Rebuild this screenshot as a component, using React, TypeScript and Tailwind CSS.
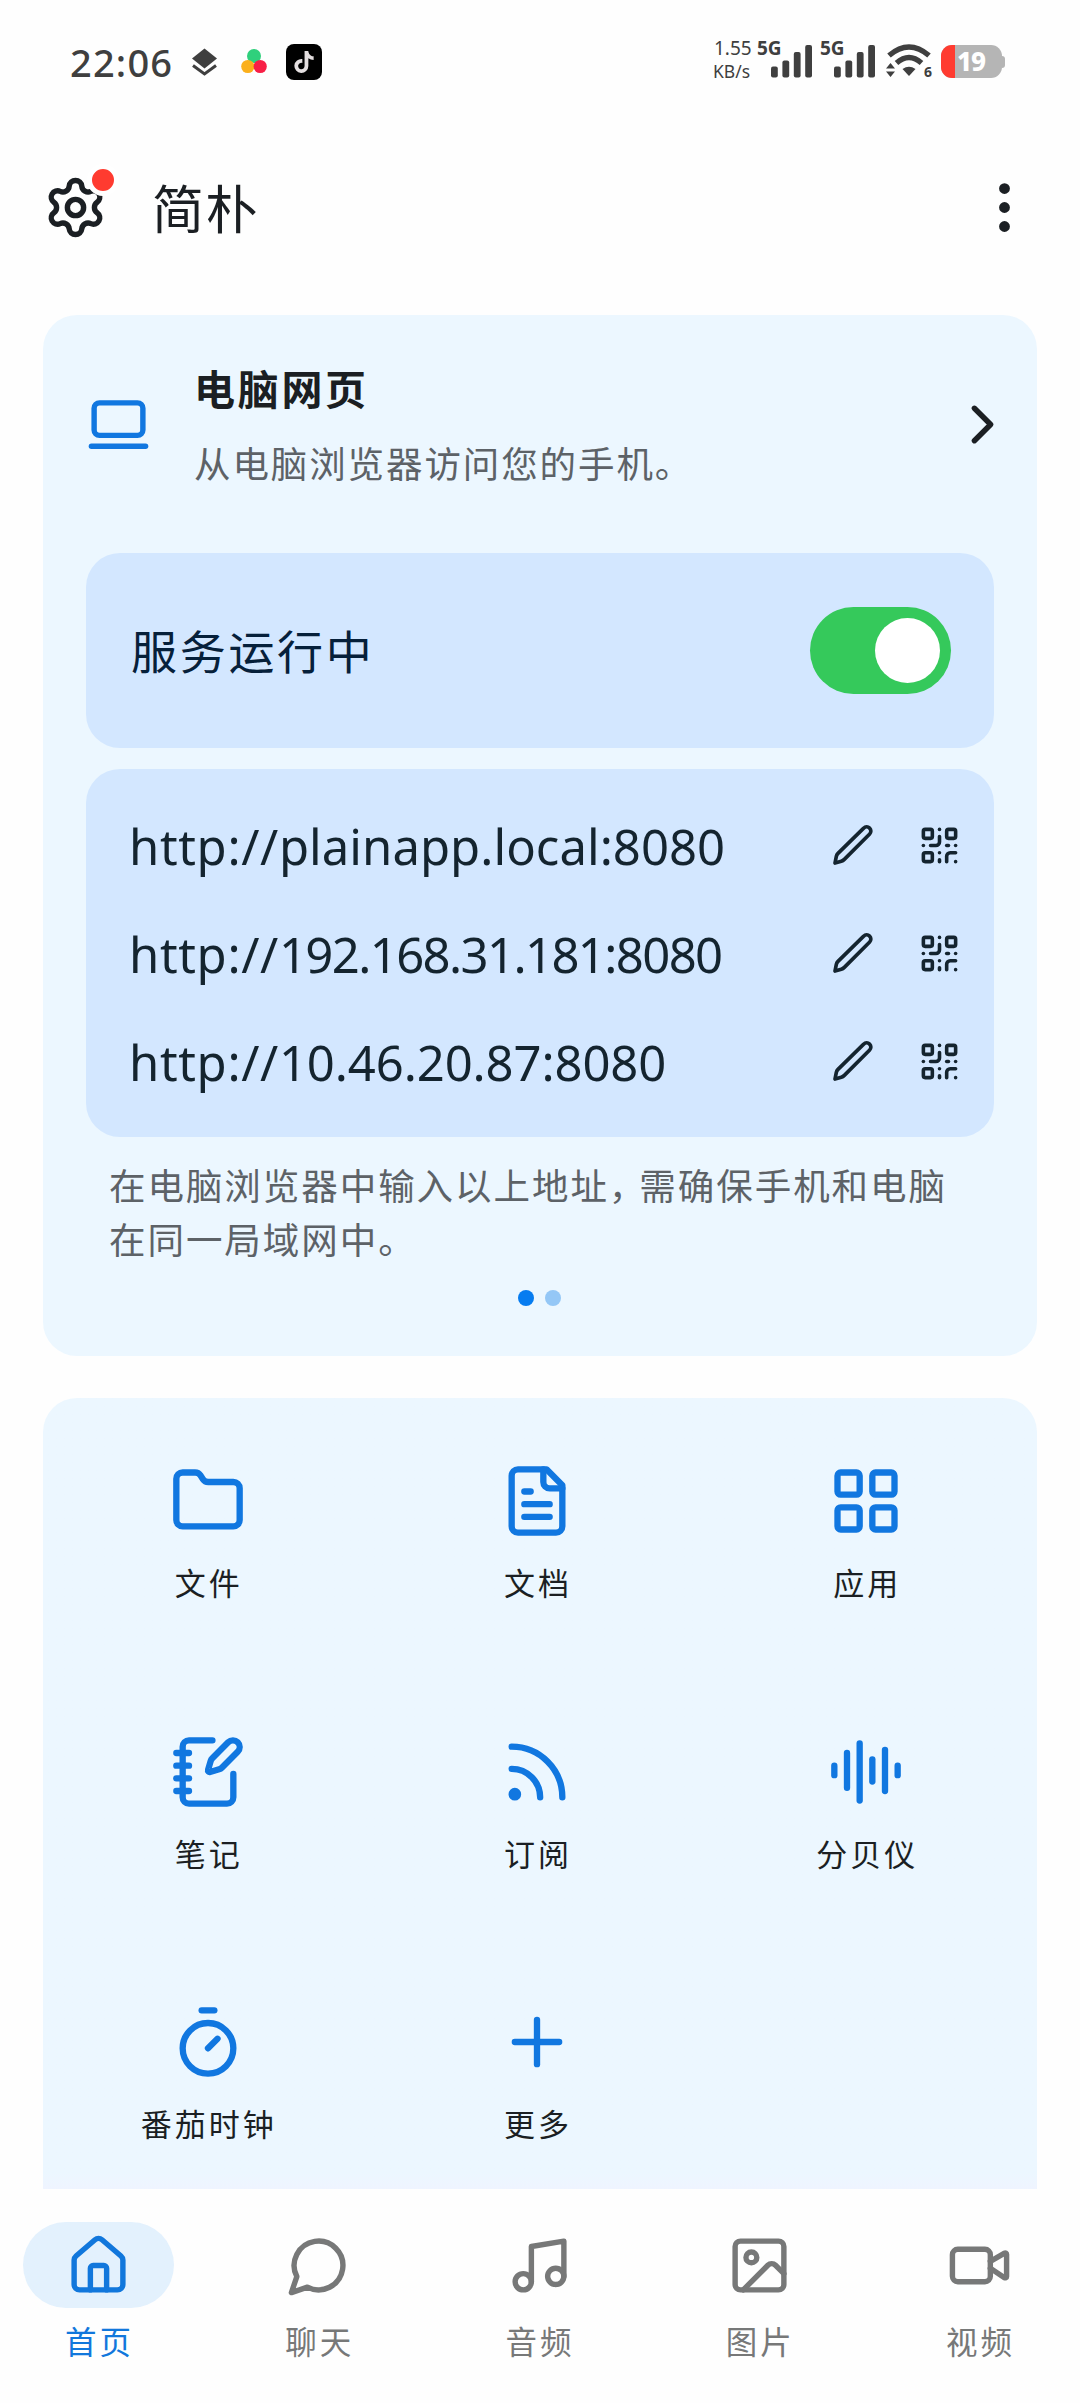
import type { ReactNode } from "react";
import {
  AudioLines,
  ChevronRight,
  EllipsisVertical,
  Folder,
  House,
  Image,
  LaptopMinimal,
  LayoutGrid,
  Music,
  NotebookPen,
  Plus,
  QrCode,
  Rss,
  Settings,
  Timer,
  Video,
} from "lucide-react";
import { FaTiktok } from "react-icons/fa6";

const strokeProps = {
  viewBox: "0 0 24 24",
  fill: "none",
  stroke: "currentColor",
  strokeWidth: 2,
  strokeLinecap: "round" as const,
  strokeLinejoin: "round" as const,
};

function DocIcon({ size = 24 }: { size?: number }) {
  return (
    <svg width={size} height={size} {...strokeProps}>
      <path d="M15 2H6a2 2 0 0 0-2 2v16a2 2 0 0 0 2 2h12a2 2 0 0 0 2-2V7Z" />
      <path d="M14 2v4a2 2 0 0 0 2 2h4" />
      <path d="M10 9H8M16 13H8M16 17H8" />
    </svg>
  );
}

function ChatIcon({ size = 24 }: { size?: number }) {
  return (
    <svg width={size} height={size} {...strokeProps}>
      <path d="M7.9 20A9 9 0 1 0 4 16.1L2 22Z" />
    </svg>
  );
}

function PenIcon() {
  return (
    <svg
      width="40"
      height="40"
      viewBox="100 74 120 120"
      fill="none"
      stroke="currentColor"
      strokeWidth="11"
      strokeLinecap="round"
      strokeLinejoin="round"
    >
      <path d="M106 188L110 168Q111 163 115 159L192 83.500A12.200 12.200 0 0 1 210 101L134 177Q130 181 125 182.500Z" />
    </svg>
  );
}

function SignalBars() {
  return (
    <svg width="42" height="33" viewBox="0 0 42 33" fill="#3f3f3f">
      <rect x="0" y="21.500" width="6.800" height="11" rx="2" />
      <rect x="11.400" y="15.500" width="6.800" height="17" rx="2" />
      <rect x="22.800" y="7" width="6.800" height="25.500" rx="2" />
      <rect x="34.200" y="0" width="6.800" height="32.500" rx="2" />
    </svg>
  );
}

function Signal() {
  return (
    <div className="relative h-[37px] w-[63px]">
      <span className="absolute left-[-1px] top-0 text-[19px] font-bold leading-[14px]">5G</span>
      <div className="absolute left-[13px] top-[4px]">
        <SignalBars />
      </div>
    </div>
  );
}

function WifiIcon() {
  return (
    <div className="relative h-[34px] w-[46px]">
      <svg width="46" height="34" viewBox="0 0 46 34">
        <g fill="none" stroke="#3f3f3f" strokeWidth="5.400">
          <path d="M3 11.500Q23 -5.500 43 11.500" />
          <path d="M10.500 19Q23 8 35.500 19" />
        </g>
        <path d="M16.500 25Q23 20.500 29.500 25L23 32Z" fill="#3f3f3f" />
        <path d="M0 24.500L4.500 19L9 24.500ZM0 27.500L4.500 33L9 27.500Z" fill="#3f3f3f" />
      </svg>
      <span className="absolute bottom-[-4px] right-0 text-[14px] font-bold leading-[20px]">6</span>
    </div>
  );
}

function StatusBar() {
  return (
    <div className="flex h-[124px] justify-between pl-[70px] pr-[75px] text-[#3f3f3f]">
      <div className="flex h-[124px] items-center">
        <span className="w-[121px] text-[38px] font-medium leading-none tracking-[1.200px]">22:06</span>
        <svg width="27" height="29" viewBox="0 0 27 29" fill="#3f3f3f">
          <path d="M13.500 0.500L26 10.500L13.500 20.500L1 10.500Z" />
          <path d="M2 17.500L13.500 26L25 17.500" fill="none" stroke="#3f3f3f" strokeWidth="3" />
        </svg>
        <svg className="ml-[23px]" width="26" height="26" viewBox="0 0 26 26">
          <circle cx="13" cy="7" r="7" fill="#2fd07c" />
          <circle cx="6.800" cy="17.500" r="6.600" fill="#fbb01c" />
          <circle cx="19.200" cy="17.500" r="6.600" fill="#f81f46" />
        </svg>
        <div className="ml-[19px] flex size-[36px] items-center justify-center rounded-[8px] bg-black">
          <FaTiktok size={22} color="#e4dfe0" />
        </div>
      </div>
      <div className="mt-[41px] flex h-[37px] items-start">
        <div className="flex w-[44px] flex-col text-[19px] leading-[23px]">
          <span className="mt-[-4px]">1.55</span>
          <span className="ml-[-1px] text-[17.500px]">KB/s</span>
        </div>
        <Signal />
        <Signal />
        <div className="ml-[2px] mt-[3px]">
          <WifiIcon />
        </div>
        <div className="ml-[9px] mt-[4px] flex items-center">
          <div className="flex h-[33px] w-[61px] rounded-[11px] bg-[#b5b5b5]">
            <div className="w-[14px] rounded-l-[11px] bg-[#ff3b30]" />
            <span className="mt-[-2px] pl-[2px] text-[26px] font-extrabold leading-[37px] tracking-[-1px] text-white">
              19
            </span>
          </div>
          <div className="h-[12px] w-[3px] rounded-r-[3px] bg-[#b5b5b5]" />
        </div>
      </div>
    </div>
  );
}

function TopBar() {
  return (
    <header className="flex h-[166px] items-center pl-[43px] pr-[43px] text-[#1b1f23]">
      <div className="relative">
        <Settings size={65} />
        <span className="absolute right-[-11px] top-[-11px] size-[32px] rounded-full border-[5px] border-white bg-[#ff3b30]" />
      </div>
      <h1 className="ml-[44px] mt-[4px] flex-1 text-[52px] leading-[60px] tracking-[1.500px]">简朴</h1>
      <EllipsisVertical size={65} />
    </header>
  );
}

const urls = [
  { host: "plainapp.local:8080", tracking: "tracking-[0.05px]" },
  { host: "192.168.31.181:8080", tracking: "tracking-[-1.6px]" },
  { host: "10.46.20.87:8080", tracking: "tracking-[-0.1px]" },
];

function WebCard() {
  return (
    <section className="mx-[43px] mt-[25px] h-[1041px] rounded-[34px] bg-[#ecf7ff] px-[43px]">
      <div className="flex h-[238px] items-center pb-[20px]">
        <LaptopMinimal size={65} className="text-[#1177e0]" />
        <div className="ml-[43px] flex-1 pt-[5px]">
          <h2 className="text-[41px] font-bold leading-[60px] tracking-[2.700px] text-[#1b1f23]">电脑网页</h2>
          <p className="mt-[15px] text-[36.500px] leading-[60px] tracking-[1.900px] text-[#5d6267]">
            从电脑浏览器访问您的手机。
          </p>
        </div>
        <ChevronRight size={65} className="mr-[-21px] text-[#1b1f23]" />
      </div>

      <div className="flex h-[195px] items-center justify-between rounded-[34px] bg-[#d3e7ff] pl-[45px] pr-[43px]">
        <span className="text-[46px] leading-[60px] tracking-[2.700px] text-[#06203a]">服务运行中</span>
        <div className="flex h-[87px] w-[141px] items-center justify-end rounded-full bg-[#35c95b] pr-[11px]">
          <div className="size-[65px] rounded-full bg-white" />
        </div>
      </div>

      <div className="mt-[21px] flex h-[368px] flex-col rounded-[34px] bg-[#d3e7ff] py-[22px] pl-[43px] pr-[11px] text-[#14242f]">
        {urls.map((url) => (
          <div key={url.host} className="flex h-[108px] items-center">
            <p className="mt-[2px] flex-1 text-[49px] leading-[60px]">
              <span className="tracking-[0.65px]">http://</span>
              <span className={url.tracking}>{url.host}</span>
            </p>
            <button className="flex w-[86px] justify-center">
              <PenIcon />
            </button>
            <button className="flex w-[87px] justify-center">
              <QrCode size={43} />
            </button>
          </div>
        ))}
      </div>

      <p className="ml-[23px] mt-[22px] text-[36.500px] leading-[54px] tracking-[1.950px] text-[#5d6267]">
        在电脑浏览器中输入以上地址<span className="tracking-[-6px]">，</span>需确保手机和电脑
        <br />
        在同一局域网中。
      </p>
      <div className="mt-[23px] flex justify-center gap-[11px] pr-[1px]">
        <span className="size-[16px] rounded-full bg-[#067cf0]" />
        <span className="size-[16px] rounded-full bg-[#94c7f6]" />
      </div>
    </section>
  );
}

const features = [
  { icon: Folder, label: "文件" },
  { icon: DocIcon, label: "文档" },
  { icon: LayoutGrid, label: "应用" },
  { icon: NotebookPen, label: "笔记" },
  { icon: Rss, label: "订阅" },
  { icon: AudioLines, label: "分贝仪" },
  { icon: Timer, label: "番茄时钟" },
  { icon: Plus, label: "更多" },
];

function FeatureGrid() {
  return (
    <section className="mx-[43px] mt-[42px] h-[791px] overflow-hidden rounded-t-[34px] bg-linear-to-b from-[#ecf7ff] from-98% to-[#eff4ff] pr-[6px]">
      <div className="grid auto-rows-[270.500px] grid-cols-3">
        {features.map((item) => (
          <div key={item.label} className="flex flex-col items-center pt-[65px]">
            <span className="text-[#1177e0]">
              <item.icon size={76} />
            </span>
            <span className="mt-[24px] pl-[2px] text-[31px] leading-[40px] tracking-[3px] text-[#1b1f23]">
              {item.label}
            </span>
          </div>
        ))}
      </div>
    </section>
  );
}

function NavItem({ label, active, children }: { label: string; active?: boolean; children: ReactNode }) {
  return (
    <div className={`flex w-[151px] flex-col items-center ${active ? "text-[#1177dc]" : "text-[#777878]"}`}>
      <div
        className={`flex h-[86px] w-full items-center justify-center rounded-full ${active ? "bg-[#e3f1fd]" : ""}`}
      >
        {children}
      </div>
      <span className="mt-[14px] pl-[2px] text-[31.500px] leading-[40px] tracking-[3px]">{label}</span>
    </div>
  );
}

function BottomNav() {
  return (
    <nav className="flex h-[214px] justify-between pl-[23px] pr-[25px] pt-[33px]">
      <NavItem label="首页" active>
        <House size={65} />
      </NavItem>
      <NavItem label="聊天">
        <ChatIcon size={65} />
      </NavItem>
      <NavItem label="音频">
        <Music size={65} />
      </NavItem>
      <NavItem label="图片">
        <Image size={65} />
      </NavItem>
      <NavItem label="视频">
        <Video size={65} />
      </NavItem>
    </nav>
  );
}

export default function App() {
  return (
    <div className="h-[2403px] w-[1080px] overflow-hidden bg-[#fefefe] font-['Noto_Sans','Noto_Sans_CJK_SC',sans-serif]">
      <StatusBar />
      <TopBar />
      <WebCard />
      <FeatureGrid />
      <BottomNav />
    </div>
  );
}
